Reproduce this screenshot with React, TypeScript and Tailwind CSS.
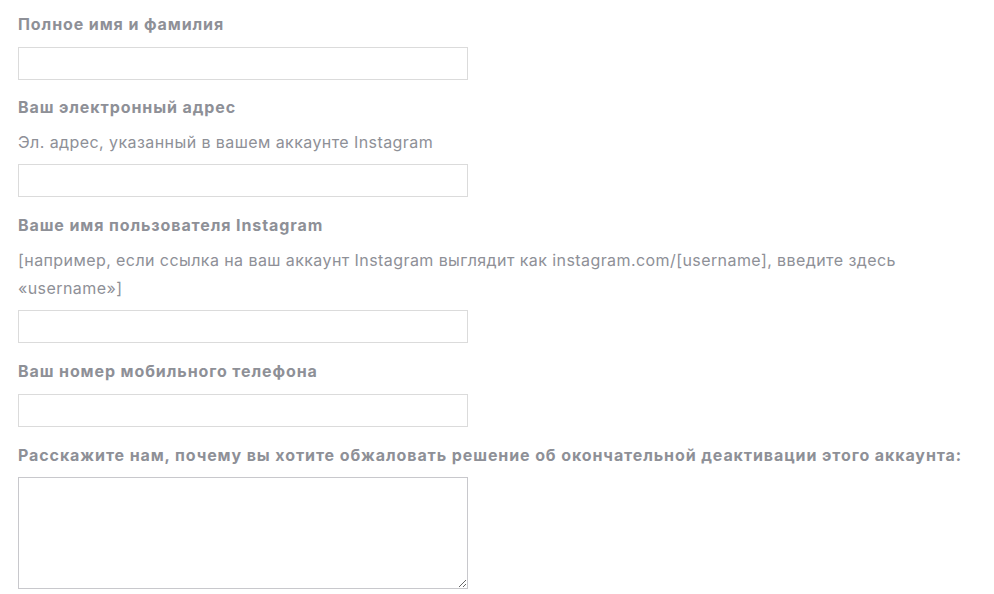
import React from 'react';

const font = { fontFamily: 'Inter, "Liberation Sans", Arial, sans-serif' };

const Label: React.FC<{ children: React.ReactNode; className?: string }> = ({ children, className = 'mt-[18px]' }) => (
  <div className={`${className} text-[16px] leading-5 font-bold tracking-[0.9px] text-[#8e9097]`}>{children}</div>
);

const Hint: React.FC<{ children: React.ReactNode }> = ({ children }) => (
  <div className="mt-[11px] mb-[8px] text-[16px] leading-7 tracking-[0.42px] text-[#8e9097]">{children}</div>
);

const Field = () => (
  <input type="text" className="block w-[450px] h-[33px] border border-[#dbdbdb] bg-white outline-none" />
);

export default function App() {
  return (
    <div className="min-h-[594px] bg-white px-[18px] pb-4" style={font}>
      <Label className="mt-[14px]">Полное имя и фамилия</Label>
      <div className="mt-[13px]"><Field /></div>

      <Label className="mt-[17px]">Ваш электронный адрес</Label>
      <Hint>Эл. адрес, указанный в вашем аккаунте Instagram</Hint>
      <Field />

      <Label>Ваше имя пользователя Instagram</Label>
      <Hint>
        [например, если ссылка на ваш аккаунт Instagram выглядит как instagram.com/[username], введите здесь
        <br />
        «username»]
      </Hint>
      <Field />

      <Label>Ваш номер мобильного телефона</Label>
      <div className="mt-[13px]"><Field /></div>

      <Label>Расскажите нам, почему вы хотите обжаловать решение об окончательной деактивации этого аккаунта:</Label>
      <textarea className="mt-[12px] block w-[450px] h-[112px] border border-[#c8c8cc] bg-white outline-none" />
    </div>
  );
}
